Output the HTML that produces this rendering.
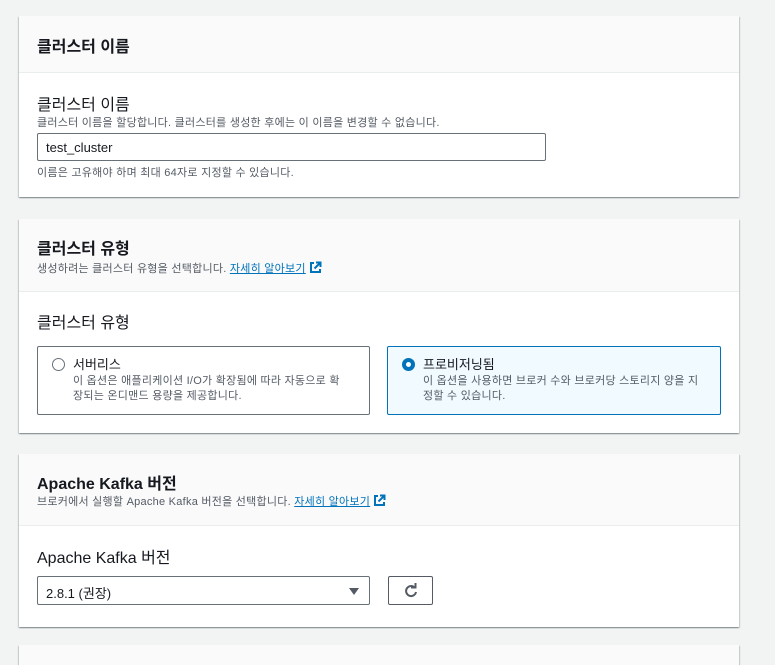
<!DOCTYPE html>
<html><head><meta charset="utf-8"><style>
*{margin:0;padding:0;box-sizing:border-box}
html,body{width:775px;height:665px;overflow:hidden}
body{background:#f2f3f3;position:relative;font-family:"Liberation Sans","Noto Sans CJK KR",sans-serif;color:#16191f}
.p{position:absolute;left:19px;width:720px;background:#fff;box-shadow:0 1px 1px rgba(0,28,36,.3),1px 1px 1px rgba(0,28,36,.15),-1px 1px 1px rgba(0,28,36,.15)}
.h{background:#fafafa;border-bottom:1px solid #eaeded;position:relative}
.a{position:absolute;white-space:nowrap}
.t{font-size:16px;font-weight:bold}
.l{font-size:16px}
.s{font-size:11px;color:#545b64;letter-spacing:0.25px}
a{color:#0073bb;text-decoration:underline}
.box{position:absolute;border:1px solid #687078;border-radius:2px}
</style></head><body>
<div class="p" style="top:16px;height:181px">
 <div class="h" style="height:57px"><div class="a t" style="left:18px;top:17px">클러스터 이름</div></div>
 <div class="a l" style="left:18px;top:75px">클러스터 이름</div>
 <div class="a s" style="left:18px;top:98px">클러스터 이름을 할당합니다. 클러스터를 생성한 후에는 이 이름을 변경할 수 없습니다.</div>
 <div class="box" style="left:18px;top:117px;width:509px;height:28px;font-size:13px;padding:6px 8px">test_cluster</div>
 <div class="a s" style="left:18px;top:148px">이름은 고유해야 하며 최대 64자로 지정할 수 있습니다.</div>
</div>
<div class="p" style="top:219px;height:214px">
 <div class="h" style="height:73px"><div class="a t" style="left:18px;top:16px">클러스터 유형</div>
 <div class="a s" style="left:18px;top:41px">생성하려는 클러스터 유형을 선택합니다. <a>자세히 알아보기</a> <svg width="13" height="13" viewBox="0 0 13 13" style="vertical-align:-2px"><path d="M5 2H2v9h9V8M7 1.5h4.5V6M11.5 1.5L5.5 7.5" fill="none" stroke="#0073bb" stroke-width="2"/></svg></div></div>
 <div class="a l" style="left:18px;top:90px">클러스터 유형</div>
 <div class="box" style="left:18px;top:127px;width:333px;height:69px">
  <div class="a" style="left:14px;top:11px;width:13px;height:13px;border:1.5px solid #687078;border-radius:50%"></div>
  <div class="a" style="left:35px;top:7px;font-size:13px">서버리스</div>
  <div class="a s" style="left:35px;top:27px;line-height:15px">이 옵션은 애플리케이션 I/O가 확장됨에 따라 자동으로 확<br>장되는 온디맨드 용량을 제공합니다.</div>
 </div>
 <div class="box" style="left:368px;top:127px;width:334px;height:69px;border-color:#0073bb;background:#f1faff">
  <div class="a" style="left:14px;top:11px;width:13px;height:13px;border:4px solid #0073bb;border-radius:50%;background:#fff"></div>
  <div class="a" style="left:35px;top:7px;font-size:13px">프로비저닝됨</div>
  <div class="a s" style="left:35px;top:27px;line-height:15px">이 옵션을 사용하면 브로커 수와 브로커당 스토리지 양을 지<br>정할 수 있습니다.</div>
 </div>
</div>
<div class="p" style="top:454px;height:173px">
 <div class="h" style="height:72px"><div class="a t" style="left:18px;top:16px">Apache Kafka 버전</div>
 <div class="a s" style="left:18px;top:39px">브로커에서 실행할 Apache Kafka 버전을 선택합니다. <a>자세히 알아보기</a> <svg width="13" height="13" viewBox="0 0 13 13" style="vertical-align:-2px"><path d="M5 2H2v9h9V8M7 1.5h4.5V6M11.5 1.5L5.5 7.5" fill="none" stroke="#0073bb" stroke-width="2"/></svg></div></div>
 <div class="a l" style="left:18px;top:90px">Apache Kafka 버전</div>
 <div class="box" style="left:18px;top:122px;width:333px;height:29px;font-size:13px;padding:6px 8px">2.8.1 (권장)
  <div class="a" style="right:10px;top:11px;width:0;height:0;border-left:5px solid transparent;border-right:5px solid transparent;border-top:7px solid #545b64"></div></div>
 <div class="box" style="left:369px;top:122px;width:45px;height:29px;border-color:#545b64">
  <svg class="a" style="left:14px;top:6px" width="16" height="16" viewBox="0 0 16 16"><path d="M13 9a5 5 0 1 1-2-5" fill="none" stroke="#545b64" stroke-width="2"/><path d="M8 4.5h4.5V0" fill="none" stroke="#545b64" stroke-width="2"/></svg></div>
</div>
<div class="p" style="top:645px;height:40px"><div class="h" style="height:40px"><div class="a t" style="left:18px;top:15px">설정</div></div></div>
</body></html>
